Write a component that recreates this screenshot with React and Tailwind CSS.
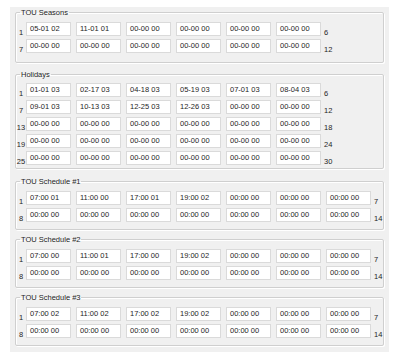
import React from "react"

const z = "00-00 00"
const t = "00:00 00"

const seasons = [
    { left: "1", right: "6", cells: ["05-01 02", "11-01 01", z, z, z, z] },
    { left: "7", right: "12", cells: [z, z, z, z, z, z] },
]

const holidays = [
    { left: "1", right: "6", cells: ["01-01 03", "02-17 03", "04-18 03", "05-19 03", "07-01 03", "08-04 03"] },
    { left: "7", right: "12", cells: ["09-01 03", "10-13 03", "12-25 03", "12-26 03", z, z] },
    { left: "13", right: "18", cells: [z, z, z, z, z, z] },
    { left: "19", right: "24", cells: [z, z, z, z, z, z] },
    { left: "25", right: "30", cells: [z, z, z, z, z, z] },
]

const schedules = [
    { title: "TOU Schedule #1", first: ["07:00 01", "11:00 00", "17:00 01", "19:00 02", t, t, t] },
    { title: "TOU Schedule #2", first: ["07:00 00", "11:00 01", "17:00 00", "19:00 02", t, t, t] },
    { title: "TOU Schedule #3", first: ["07:00 02", "11:00 02", "17:00 02", "19:00 02", t, t, t] },
]

function Row({ left, right, cells }) {
    return (
        <div className="flex items-end h-[14px]">
            <div className="w-[10px] text-center leading-[9px] mb-[-1px]">{left}</div>
            <div className="flex gap-[5px]">
                {cells.map((v, i) => (
                    <div
                        key={`c-${i}`}
                        className="w-[45px] h-[14px] bg-white border border-[#dadada] pl-[3px] leading-[12px] whitespace-nowrap"
                    >
                        {v}
                    </div>
                ))}
            </div>
            <div className="ml-[3px] leading-[9px] mb-[-1px]">{right}</div>
        </div>
    )
}

function Group({ title, className, children }) {
    return (
        <fieldset className={`border border-[#cfcfcf] rounded-[2px] shadow-[inset_1px_1px_0_#ffffff,1px_1px_0_#ffffff] ${className}`}>
            <legend className="ml-[4px] px-[1px] leading-[9px]">{title}</legend>
            <div className="flex flex-col gap-[3px]">{children}</div>
        </fieldset>
    )
}

export default function App() {
    return (
        <div className="w-[399px] h-[359px] bg-white overflow-hidden text-[7.5px] text-[#1e1e1e]" style={{ fontFamily: '"Liberation Sans", Arial, sans-serif' }}>
            <div className="ml-[10px] mt-[7px] w-[379px] h-[345px] bg-[#f0f0f0] px-[5px] pt-[1px]">
                <Group title="TOU Seasons" className="pt-[5px] pb-[9px]">
                    {seasons.map((r, i) => <Row key={`s-${i}`} {...r} />)}
                </Group>
                <Group title="Holidays" className="mt-[7px] pt-[4px] pb-[3px]">
                    {holidays.map((r, i) => <Row key={`h-${i}`} {...r} />)}
                </Group>
                {schedules.map((s, i) => (
                    <Group key={`t-${i}`} title={s.title} className={`${i === 0 ? "mt-[8px]" : "mt-[5px]"} pt-[5px] pb-[7px]`}>
                        <Row left="1" right="7" cells={s.first} />
                        <Row left="8" right="14" cells={[t, t, t, t, t, t, t]} />
                    </Group>
                ))}
            </div>
        </div>
    )
}
